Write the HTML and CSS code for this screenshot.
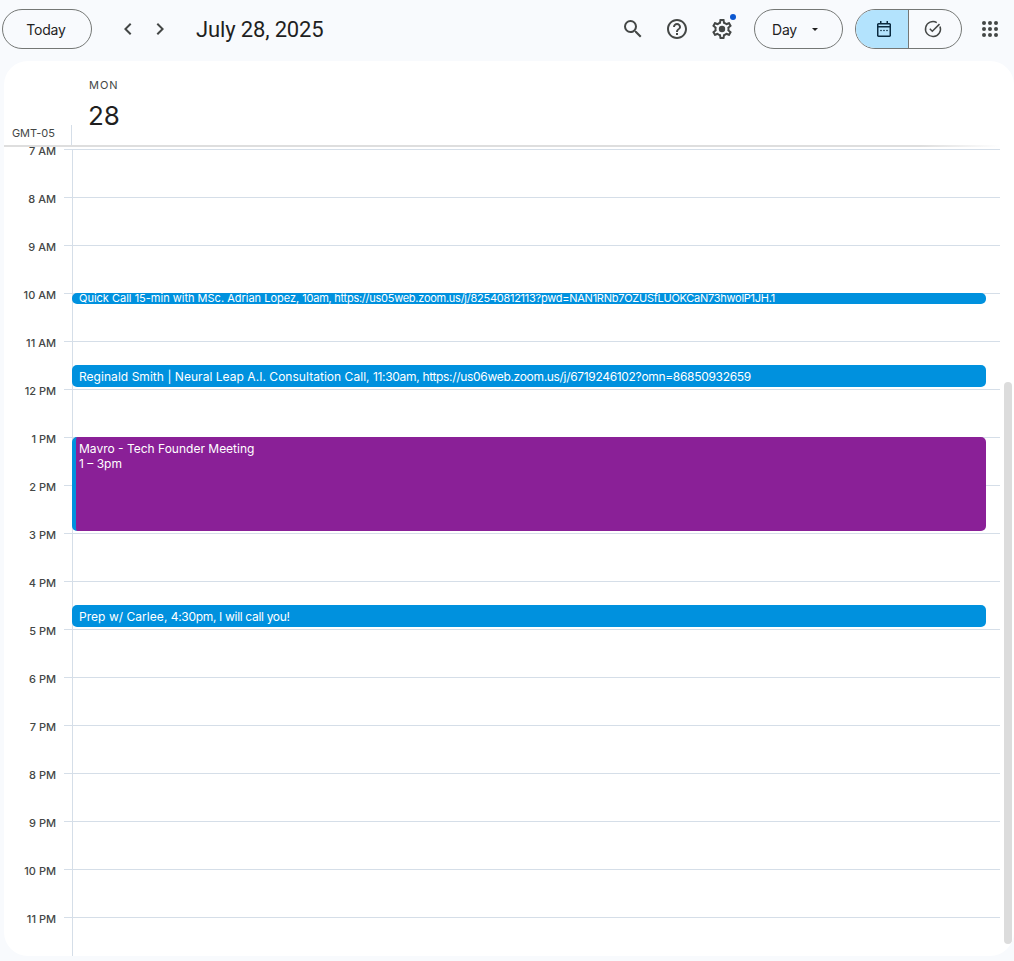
FILE: index.html
```html
<!DOCTYPE html>
<html lang="en">
<head>
    <meta charset="UTF-8">
    <meta name="viewport" content="width=device-width, initial-scale=1.0">
    <title>Calendar - July 28, 2025</title>
    <link rel="stylesheet" href="styles.css">
</head>
<body>
    <header class="topbar">
        <button class="pill today">Today</button>
        <nav class="nav">
            <button class="icon-btn nav-btn"><svg width="24" height="24" viewBox="0 0 24 24"><path d="M15.41 7.41 14 6l-6 6 6 6 1.41-1.41L10.83 12z"/></svg></button>
            <button class="icon-btn nav-btn"><svg width="24" height="24" viewBox="0 0 24 24"><path d="M8.59 16.59 10 18l6-6-6-6-1.41 1.41L13.17 12z"/></svg></button>
        </nav>
        <h1 class="title">July 28, 2025</h1>

        <div class="tools">
            <button class="icon-btn"><svg width="24" height="24" viewBox="0 0 24 24"><path d="M15.5 14h-.79l-.28-.27A6.471 6.471 0 0 0 16 9.5 6.5 6.5 0 1 0 9.5 16c1.61 0 3.09-.59 4.23-1.57l.27.28v.79l5 4.99L20.49 19l-4.99-5zm-6 0C7.01 14 5 11.99 5 9.5S7.01 5 9.5 5 14 7.01 14 9.5 11.99 14 9.5 14z"/></svg></button>
            <button class="icon-btn"><svg width="24" height="24" viewBox="0 0 24 24"><path d="M11 18h2v-2h-2v2zm1-16C6.48 2 2 6.48 2 12s4.48 10 10 10 10-4.48 10-10S17.52 2 12 2zm0 18c-4.41 0-8-3.59-8-8s3.59-8 8-8 8 3.59 8 8-3.59 8-8 8zm0-14c-2.21 0-4 1.79-4 4h2c0-1.1.9-2 2-2s2 .9 2 2c0 2-3 1.75-3 5h2c0-2.25 3-2.5 3-5 0-2.21-1.79-4-4-4z"/></svg></button>
            <button class="icon-btn settings">
                <svg width="24" height="24" viewBox="0 0 24 24"><path d="M19.43 12.98c.04-.32.07-.64.07-.98 0-.34-.03-.66-.07-.98l2.11-1.65c.19-.15.24-.42.12-.64l-2-3.46c-.09-.16-.26-.25-.44-.25-.06 0-.12.01-.17.03l-2.49 1c-.52-.4-1.08-.73-1.69-.98l-.38-2.65C14.46 2.18 14.25 2 14 2h-4c-.25 0-.46.18-.49.42l-.38 2.65c-.61.25-1.17.59-1.69.98l-2.49-1c-.06-.02-.12-.03-.18-.03-.17 0-.34.09-.43.25l-2 3.46c-.13.22-.07.49.12.64l2.11 1.65c-.04.32-.07.65-.07.98 0 .33.03.66.07.98l-2.11 1.65c-.19.15-.24.42-.12.64l2 3.46c.09.16.26.25.44.25.06 0 .12-.01.17-.03l2.49-1c.52.4 1.08.73 1.69.98l.38 2.65c.03.24.24.42.49.42h4c.25 0 .46-.18.49-.42l.38-2.65c.61-.25 1.17-.59 1.69-.98l2.49 1c.06.02.12.03.18.03.17 0 .34-.09.43-.25l2-3.46c.12-.22.07-.49-.12-.64l-2.11-1.65zm-1.98-1.71c.04.31.05.52.05.73 0 .21-.02.43-.05.73l-.14 1.13.89.7 1.08.84-.7 1.21-1.27-.51-1.04-.42-.9.68c-.43.32-.84.56-1.25.73l-1.06.43-.16 1.13-.2 1.35h-1.4l-.19-1.35-.16-1.13-1.06-.43c-.43-.18-.83-.41-1.23-.71l-.91-.7-1.06.43-1.27.51-.7-1.21 1.08-.84.89-.7-.14-1.13c-.03-.31-.05-.54-.05-.74s.02-.43.05-.73l.14-1.13-.89-.7-1.08-.84.7-1.21 1.27.51 1.04.42.9-.68c.43-.32.84-.56 1.25-.73l1.06-.43.16-1.13.2-1.35h1.39l.19 1.35.16 1.13 1.06.43c.43.18.83.41 1.23.71l.91.7 1.06-.43 1.27-.51.7 1.21-1.07.85-.89.7.14 1.13z"/><circle cx="12" cy="12" r="3.2"/></svg>
                <span class="dot"></span>
            </button>
        </div>

        <button class="pill day">Day <span class="caret"></span></button>

        <div class="segment">
            <button class="seg-btn active"><svg width="20" height="20" viewBox="0 0 20 20"><path d="M4.5 18q-.62 0-1.060-.44T3 16.500v-11q0-.62.44-1.060T4.500 4H6V2h1.500v2h5V2H14v2h1.500q.62 0 1.060.44T17 5.500v11q0 .62-.44 1.060T15.500 18zm0-1.500h11V8.500h-11zm0-9.500h11V5.500h-11z"/><circle cx="7" cy="11.500" r=".8"/><circle cx="10" cy="11.500" r=".8"/><circle cx="13" cy="11.500" r=".8"/></svg></button>
            <button class="seg-btn task"><svg width="20" height="20" viewBox="0 0 20 20"><path d="M17 7.400A7.500 7.500 0 1 1 13.800 3.600"/><path d="M6.800 9.800l2.500 2.500 7.200-7.200"/></svg></button>
        </div>

        <button class="icon-btn apps">
            <svg width="20" height="20" viewBox="0 0 20 20"><circle cx="4" cy="4" r="2"/><circle cx="10" cy="4" r="2"/><circle cx="16" cy="4" r="2"/><circle cx="4" cy="10" r="2"/><circle cx="10" cy="10" r="2"/><circle cx="16" cy="10" r="2"/><circle cx="4" cy="16" r="2"/><circle cx="10" cy="16" r="2"/><circle cx="16" cy="16" r="2"/></svg>
        </button>
    </header>

    <main class="card">
        <div class="head">
            <div class="tz"><span class="tz-label">GMT-05</span></div>
            <div class="day-head">
                <div class="day-name">MON</div>
                <div class="day-num">28</div>
            </div>
        </div>
        <div class="head-rule"></div>

        <div class="hours">
            <div class="hour"><span class="hour-label">7 AM</span><span class="hour-line"></span></div>
            <div class="hour"><span class="hour-label">8 AM</span><span class="hour-line"></span></div>
            <div class="hour"><span class="hour-label">9 AM</span><span class="hour-line"></span></div>
            <div class="hour"><span class="hour-label">10 AM</span><span class="hour-line"></span></div>
            <div class="hour"><span class="hour-label">11 AM</span><span class="hour-line"></span></div>
            <div class="hour"><span class="hour-label">12 PM</span><span class="hour-line"></span></div>
            <div class="hour"><span class="hour-label">1 PM</span><span class="hour-line"></span></div>
            <div class="hour"><span class="hour-label">2 PM</span><span class="hour-line"></span></div>
            <div class="hour"><span class="hour-label">3 PM</span><span class="hour-line"></span></div>
            <div class="hour"><span class="hour-label">4 PM</span><span class="hour-line"></span></div>
            <div class="hour"><span class="hour-label">5 PM</span><span class="hour-line"></span></div>
            <div class="hour"><span class="hour-label">6 PM</span><span class="hour-line"></span></div>
            <div class="hour"><span class="hour-label">7 PM</span><span class="hour-line"></span></div>
            <div class="hour"><span class="hour-label">8 PM</span><span class="hour-line"></span></div>
            <div class="hour"><span class="hour-label">9 PM</span><span class="hour-line"></span></div>
            <div class="hour"><span class="hour-label">10 PM</span><span class="hour-line"></span></div>
            <div class="hour"><span class="hour-label">11 PM</span><span class="hour-line"></span></div>

            <div class="events">
                <div class="event thin" style="top: 144px; height: 11px;"><b>Quick Call 15-min with MSc. Adrian Lopez,</b> <span class="detail">10am, https://us05web.zoom.us/j/82540812113?pwd=NAN1RNb7OZUSfLUOKCaN73hwolP1JH.1</span></div>
                <div class="event" style="top: 216px; height: 22px;"><b>Reginald Smith | Neural Leap A.I. Consultation Call,</b> <span class="detail">11:30am, https://us06web.zoom.us/j/6719246102?omn=86850932659</span></div>
                <div class="event purple" style="top: 288px; height: 94px;">
                    <div>Mavro - Tech Founder Meeting</div>
                    <div class="event-time">1 – 3pm</div>
                </div>
                <div class="event" style="top: 456px; height: 22px;"><b>Prep w/ Carlee,</b> <span class="detail">4:30pm, I will call you!</span></div>
            </div>
        </div>

        <div class="scrollbar"></div>
    </main>
</body>
</html>
```

FILE: styles.css
```css
* {
    box-sizing: border-box;
}
body {
    font-family: Inter, "Noto Sans", sans-serif;
    background-color: #f8fafd;
    color: #1f1f1f;
    margin: 0;
    height: 961px;
    overflow: hidden;
}
button {
    font-family: inherit;
    color: inherit;
    background: none;
    border: none;
    padding: 0;
}
svg {
    display: block;
    fill: #444746;
}

.topbar {
    display: flex;
    align-items: center;
    height: 61px;
    padding: 0 2px 3px;
}
.pill {
    height: 40px;
    border: 1px solid #747775;
    border-radius: 20px;
    font-size: 14px;
    font-weight: 400;
    letter-spacing: -0.2px;
}
.today {
    width: 90px;
    padding-right: 2px;
}
.icon-btn {
    display: flex;
    align-items: center;
    justify-content: center;
    width: 44px;
    height: 40px;
}
.nav {
    display: flex;
    margin-left: 20px;
}
.nav-btn {
    width: 32px;
}
.title {
    margin: 0 0 0 20px;
    font-family: Roboto, sans-serif;
    font-size: 22px;
    font-weight: 400;
    letter-spacing: -0.15px;
}
.tools {
    display: flex;
    margin-left: auto;
}
.settings {
    position: relative;
    padding-left: 2px;
}
.dot {
    position: absolute;
    top: 5px;
    right: 7px;
    width: 6px;
    height: 6px;
    border-radius: 50%;
    background: #0b57d0;
}
.day {
    display: flex;
    align-items: center;
    width: 89px;
    margin-left: 11px;
    padding-left: 17px;
}
.caret {
    margin-left: 15px;
    border-top: 3.5px solid #1f1f1f;
    border-left: 3.5px solid transparent;
    border-right: 3.5px solid transparent;
}
.segment {
    display: flex;
    width: 107px;
    height: 40px;
    margin-left: 12px;
    border: 1px solid #747775;
    border-radius: 20px;
    overflow: hidden;
}
.seg-btn {
    display: flex;
    align-items: center;
    justify-content: center;
    flex: 1;
}
.seg-btn.active {
    flex: none;
    width: 53px;
    padding-left: 4px;
    background: #b3e3fd;
    border-right: 1px solid #747775;
}
.seg-btn.active svg {
    fill: #0a2a3f;
}
.seg-btn.task {
    padding-right: 4px;
}
.seg-btn.task svg {
    fill: none;
    stroke: #444746;
    stroke-width: 1.5;
}
.apps {
    margin-left: 6px;
}

.card {
    position: relative;
    height: 895px;
    margin-left: 4px;
    background: #fff;
    border-radius: 24px;
    overflow: hidden;
}
.head {
    display: flex;
    height: 84px;
}
.tz {
    display: flex;
    align-items: flex-end;
    justify-content: flex-end;
    width: 68px;
    height: 20px;
    margin-top: 64px;
    padding-right: 16px;
    border-right: 1px solid #d5dee8;
    white-space: nowrap;
}
.tz-label {
    font-size: 11px;
    line-height: 16px;
    color: #444746;
    margin-bottom: 4px;
}
.day-head {
    padding: 16px 0 0 17px;
}
.day-name {
    font-size: 11px;
    font-weight: 400;
    line-height: 16px;
    letter-spacing: 1px;
    color: #444746;
}
.day-num {
    margin-top: 6px;
    margin-left: -1px;
    font-size: 26px;
    line-height: 34px;
}
.head-rule {
    height: 4px;
    width: 996px;
    background: linear-gradient(to right, #dedede 92%, #fff 100%);
    border-bottom: 2px solid #fff;
}

.hours {
    position: relative;
    height: 807px;
}
.hour {
    display: flex;
    height: 48px;
}
.hour-label {
    width: 52px;
    font-size: 11px;
    font-weight: 500;
    line-height: 14px;
    margin-top: -5px;
    text-align: right;
    color: #444746;
}
.hour-line {
    width: 936px;
    margin-left: 8px;
    border-top: 1px solid #d5dee8;
}
.events {
    position: absolute;
    top: 0;
    bottom: 0;
    left: 68px;
    width: 928px;
    border-left: 1px solid #d5dee8;
}
.event {
    position: absolute;
    left: -1px;
    right: 14px;
    padding: 4px 8px 0 7px;
    background: #0091de;
    border-radius: 5px;
    color: #fff;
    font-size: 12px;
    line-height: 16px;
    white-space: nowrap;
    overflow: hidden;
}
.event b {
    font-weight: 400;
    letter-spacing: 0.04px;
}
.detail {
    letter-spacing: -0.32px;
}
.event.thin {
    padding-top: 0;
    font-size: 11px;
    line-height: 11px;
    overflow: visible;
}
.event.thin b {
    letter-spacing: 0;
}
.event.thin .detail {
    letter-spacing: -0.26px;
}
.event.purple {
    background: #8a2097;
    border-left: 4px solid #0091de;
    padding-left: 3px;
}
.event-time {
    margin-top: -1px;
}
.scrollbar {
    position: absolute;
    top: 321px;
    right: 2px;
    width: 8px;
    height: 562px;
    border-radius: 4px;
    background: #dcdcdc;
}
```
